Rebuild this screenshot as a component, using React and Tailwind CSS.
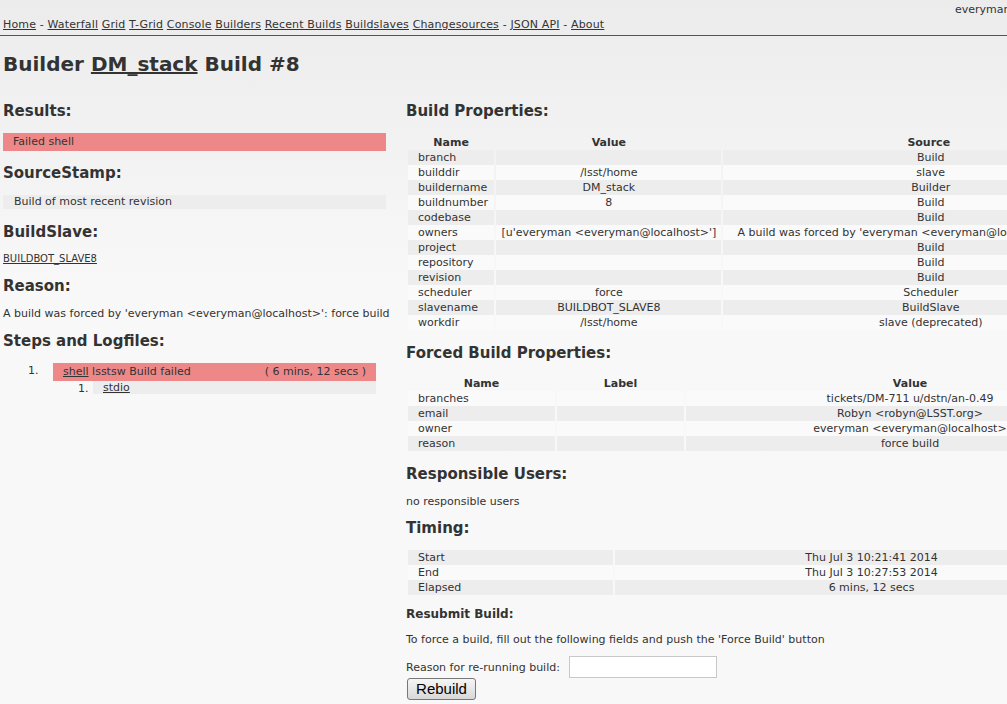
import React from 'react';

const buildProps = [
    ['branch', '', 'Build'],
    ['builddir', '/lsst/home', 'slave'],
    ['buildername', 'DM_stack', 'Builder'],
    ['buildnumber', '8', 'Build'],
    ['codebase', '', 'Build'],
    ['owners', "[u'everyman <everyman@localhost>']", "A build was forced by 'everyman <everyman@localhost>': force build"],
    ['project', '', 'Build'],
    ['repository', '', 'Build'],
    ['revision', '', 'Build'],
    ['scheduler', 'force', 'Scheduler'],
    ['slavename', 'BUILDBOT_SLAVE8', 'BuildSlave'],
    ['workdir', '/lsst/home', 'slave (deprecated)'],
];

const forcedProps = [
    ['branches', '', 'tickets/DM-711 u/dstn/an-0.49'],
    ['email', '', 'Robyn <robyn@LSST.org>'],
    ['owner', '', 'everyman <everyman@localhost>'],
    ['reason', '', 'force build'],
];

const timing = [
    ['Start', 'Thu Jul 3 10:21:41 2014'],
    ['End', 'Thu Jul 3 10:27:53 2014'],
    ['Elapsed', '6 mins, 12 secs'],
];

const navLinks = ['Waterfall', 'Grid', 'T-Grid', 'Console', 'Builders', 'Recent Builds', 'Buildslaves', 'Changesources'];

function Heading({ children, className = '' }) {
    return <h2 className={`text-[15px] leading-[20px] font-bold text-[#333] ${className}`}>{children}</h2>;
}

function Link({ children }) {
    return <a href="#" className="underline text-[#333]">{children}</a>;
}

export default function App() {
    return (
        <div className="h-screen w-full overflow-hidden bg-linear-to-b from-[#ececec] to-[#f8f8f8] to-40% text-[#333] text-[11px] leading-[15px]" style={{ fontFamily: '"DejaVu Sans", Verdana, sans-serif' }}>
            <div className="w-[1140px]">
                {/* Header */}
                <div className="flex h-[17px] items-end">
                    <div className="ml-auto w-[185px]">everyman</div>
                </div>
                <div className="px-[3px] pb-[3px] border-b border-[#555] whitespace-nowrap tracking-[0.15px]">
                    <Link>Home</Link> - {navLinks.map((l) => (
                        <React.Fragment key={l}><Link>{l}</Link>{' '}</React.Fragment>
                    ))}- <Link>JSON API</Link> - <Link>About</Link>
                </div>

                <h1 className="mt-[15px] ml-[3px] text-[20px] leading-[26px] font-bold text-[#333]">
                    Builder <a href="#" className="underline">DM_stack</a> Build #8
                </h1>

                <div className="flex gap-[20px] mt-[24px] ml-[3px]">
                    {/* Left column */}
                    <div className="w-[383px] shrink-0">
                        <Heading>Results:</Heading>
                        <div className="mt-[12px] h-[18px] leading-[18px] bg-[#ee8888] pl-[10px]">Failed shell</div>

                        <Heading className="mt-[12px]">SourceStamp:</Heading>
                        <div className="mt-[12px] h-[14px] leading-[14px] bg-[#ededed] pl-[11px]">Build of most recent revision</div>

                        <Heading className="mt-[13px]">BuildSlave:</Heading>
                        <div className="mt-[10px] h-[14px] leading-[14px] text-[10px]"><Link>BUILDBOT_SLAVE8</Link></div>

                        <Heading className="mt-[10px]">Reason:</Heading>
                        <p className="mt-[10px] whitespace-nowrap">A build was forced by 'everyman &lt;everyman@localhost&gt;': force build</p>

                        <Heading className="mt-[10px]">Steps and Logfiles:</Heading>
                        <ol className="mt-[12px] mr-[10px]">
                            <li className="flex">
                                <span className="w-[50px] pl-[25px]">1.</span>
                                <div className="flex-1 flex h-[18px] leading-[18px] bg-[#ee8888] pl-[10px] pr-[10px]">
                                    <Link>shell</Link>&nbsp;lsstsw Build failed
                                    <span className="ml-auto">( 6 mins, 12 secs )</span>
                                </div>
                            </li>
                            <li className="flex">
                                <span className="w-[90px] pl-[75px]">1.</span>
                                <div className="flex-1 h-[13px] leading-[13px] bg-[#ededed] pl-[10px]"><Link>stdio</Link></div>
                            </li>
                        </ol>
                    </div>

                    {/* Right column */}
                    <div className="w-[730px] shrink-0">
                        <Heading>Build Properties:</Heading>
                        <table className="mt-[14px] w-full border-separate border-spacing-x-0.5 border-spacing-y-0 whitespace-nowrap">
                            <thead>
                                <tr className="h-[15px]">
                                    <th className="w-[91px] font-bold">Name</th>
                                    <th className="w-[233px] font-bold">Value</th>
                                    <th className="font-bold">Source</th>
                                </tr>
                            </thead>
                            <tbody>
                                {buildProps.map((r, i) => (
                                    <tr key={r[0]} className={`h-[15px] ${i % 2 === 0 ? 'bg-[#ededed]' : 'bg-[#fafafa]'}`}>
                                        <td className="pl-[10px]">{r[0]}</td>
                                        <td className="text-center">{r[1]}</td>
                                        <td className="text-center pl-[14px] pr-[10px]">{r[2]}</td>
                                    </tr>
                                ))}
                            </tbody>
                        </table>

                        <Heading className="mt-[13px]">Forced Build Properties:</Heading>
                        <table className="mt-[13px] w-full border-separate border-spacing-x-0.5 border-spacing-y-0 whitespace-nowrap">
                            <thead>
                                <tr className="h-[15px]">
                                    <th className="w-[147px] font-bold">Name</th>
                                    <th className="w-[127px] font-bold">Label</th>
                                    <th className="font-bold">Value</th>
                                </tr>
                            </thead>
                            <tbody>
                                {forcedProps.map((r, i) => (
                                    <tr key={r[0]} className={`h-[15px] ${i % 2 === 1 ? 'bg-[#ededed]' : 'bg-[#fafafa]'}`}>
                                        <td className="pl-[10px]">{r[0]}</td>
                                        <td className="text-center">{r[1]}</td>
                                        <td className="text-center">{r[2]}</td>
                                    </tr>
                                ))}
                            </tbody>
                        </table>

                        <Heading className="mt-[13px]">Responsible Users:</Heading>
                        <p className="mt-[10px]">no responsible users</p>

                        <Heading className="mt-[9px]">Timing:</Heading>
                        <table className="mt-[12px] w-full border-separate border-spacing-x-0.5 border-spacing-y-0 whitespace-nowrap">
                            <tbody>
                                {timing.map((r, i) => (
                                    <tr key={r[0]} className={`h-[15px] ${i % 2 === 0 ? 'bg-[#ededed]' : 'bg-[#fafafa]'}`}>
                                        <td className="w-[205px] pl-[10px]">{r[0]}</td>
                                        <td className="text-center pr-[6px]">{r[1]}</td>
                                    </tr>
                                ))}
                            </tbody>
                        </table>

                        <h3 className="mt-[12px] text-[12px] leading-[15px] font-bold">Resubmit Build:</h3>
                        <p className="mt-[10px]">To force a build, fill out the following fields and push the 'Force Build' button</p>
                        <form className="mt-[9px]">
                            <div className="flex items-center gap-[9px]">
                                <label>Reason for re-running build:</label>
                                <input type="text" className="w-[148px] h-[22px] bg-white border border-[#c8c8c8]" />
                            </div>
                            <button type="button" className="ml-[1px] w-[69px] h-[22px] rounded-[3px] border border-[#777] bg-linear-to-b from-[#f6f6f6] to-[#d8d8d8] text-[15px] leading-[20px] text-black" style={{ fontFamily: '"Liberation Sans", Arial, sans-serif' }}>
                                Rebuild
                            </button>
                        </form>
                    </div>
                </div>
            </div>
        </div>
    );
}
